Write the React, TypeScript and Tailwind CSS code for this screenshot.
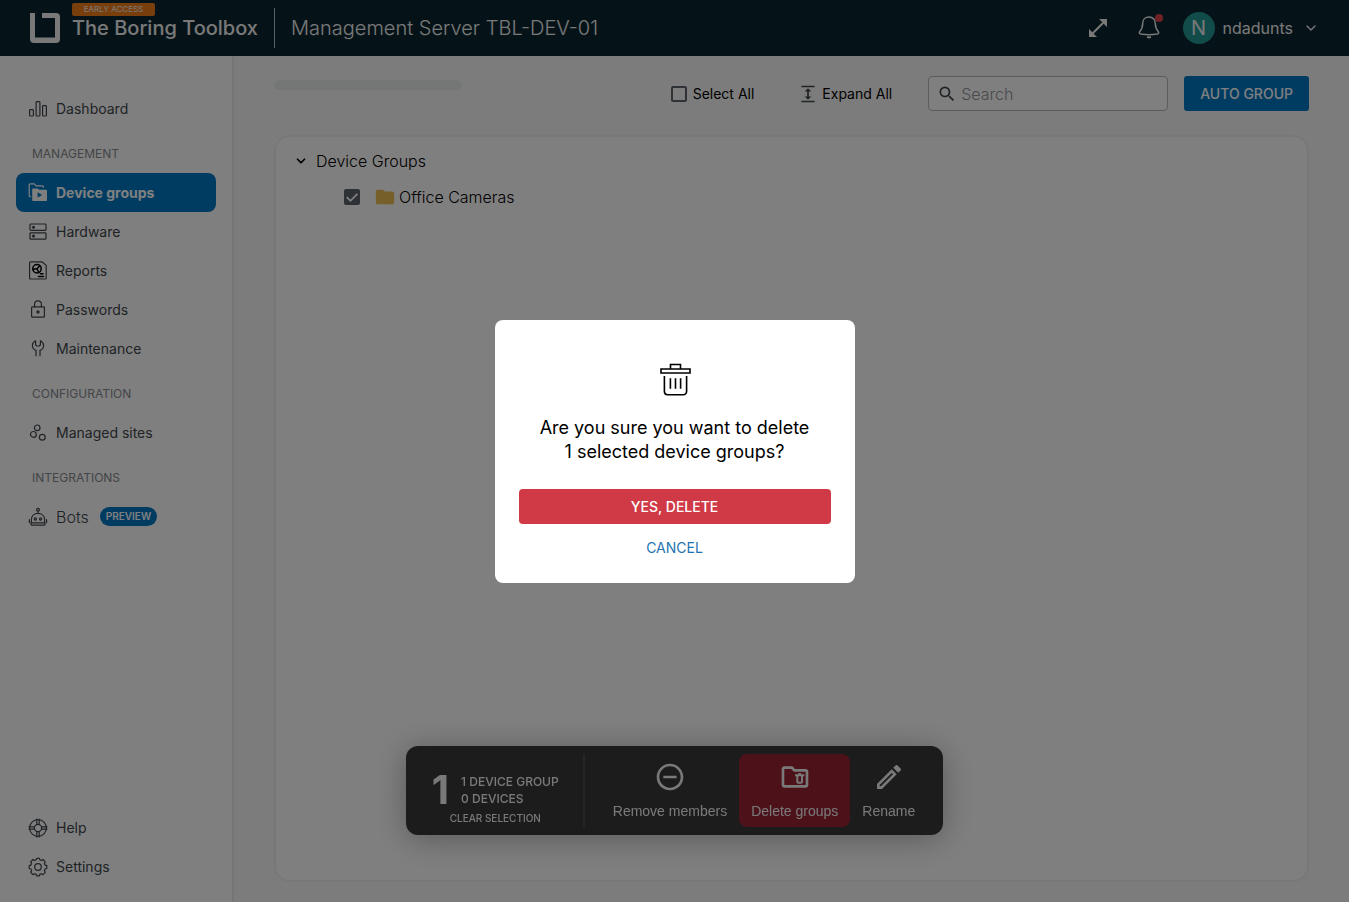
import { useState } from 'react';
import type { ReactNode } from 'react';
import {
  MdOpenInFull,
  MdSearch,
  MdExpand,
  MdFolder,
  MdRemoveCircleOutline,
  MdOutlineFolderDelete,
  MdOutlineEdit,
} from 'react-icons/md';
import { ChevronDown } from 'lucide-react';

/* ================= ICONS ================= */

function LineIcon({ children }: { children: ReactNode }) {
  return (
    <svg
      viewBox="0 0 20 20"
      className="w-5 h-5 shrink-0"
      fill="none"
      stroke="currentColor"
      strokeWidth="1.2"
      strokeLinecap="round"
      strokeLinejoin="round"
      aria-hidden="true"
    >
      {children}
    </svg>
  );
}

const icons = {
  dashboard: (
    <LineIcon>
      <rect x="1.6" y="10.6" width="3.8" height="6.4" rx="0.8" />
      <rect x="8.1" y="2.6" width="3.8" height="14.4" rx="0.8" />
      <rect x="14.6" y="6.6" width="3.8" height="10.4" rx="0.8" />
    </LineIcon>
  ),
  groups: (
    <LineIcon>
      <path d="M2.6 13.6h-.4a1 1 0 0 1-1-1V1.800a1 1 0 0 1 1-1h4.200l1.800 2h6.200a1 1 0 0 1 1 1v.4" />
      <path
        fillRule="evenodd"
        fill="currentColor"
        stroke="none"
        d="M5 5.400h4.600L11 6.800h7.200a.8.8 0 0 1 .8.8v9.600a.8.8 0 0 1-.8.8H5a.8.8 0 0 1-.8-.8v-11A.8.8 0 0 1 5 5.400zM9.600 9.200v5.400l4.600-2.700z"
      />
    </LineIcon>
  ),
  hardware: (
    <LineIcon>
      <rect x="2" y="2" width="16" height="6.400" rx="0.800" />
      <rect x="2" y="10.800" width="16" height="6.400" rx="0.800" />
      <circle cx="5.500" cy="5.200" r="0.900" fill="currentColor" />
      <circle cx="5.500" cy="14" r="0.900" fill="currentColor" />
    </LineIcon>
  ),
  reports: (
    <LineIcon>
      <path d="M2.600.800H14l4.200 3.600V17a1 1 0 0 1-1 1H2.600a1 1 0 0 1-1-1V1.800a1 1 0 0 1 1-1z" />
      <g stroke="#000" strokeWidth="1.500">
        <circle cx="9" cy="7.700" r="4.200" />
        <path d="M5 8.200l4-.5 2.800-3M9 7.700l1.800 3.800M12.500 12.800h2.500M10.500 15.400h5" />
      </g>
    </LineIcon>
  ),
  passwords: (
    <LineIcon>
      <rect x="3.600" y="6.800" width="12.800" height="10.400" rx="0.800" />
      <path d="M6.600 6.800V4.200a3.400 3.400 0 0 1 6.800 0v2.600" />
      <circle cx="10" cy="12" r="1.100" fill="currentColor" />
    </LineIcon>
  ),
  maintenance: (
    <LineIcon>
      <path d="M8 16.800v-5.400C5.800 10.500 4.400 8.700 4.400 6.400c0-2 1.200-3.700 3.200-4.700V6L9 7h2l1.400-1V1.700c2 1 3.200 2.700 3.200 4.700 0 2.300-1.400 4.100-3.600 5v5.400" />
    </LineIcon>
  ),
  sites: (
    <LineIcon>
      <circle cx="9.200" cy="4.800" r="2.800" />
      <circle cx="5.400" cy="11.400" r="2.900" />
      <circle cx="14.300" cy="14.300" r="2.900" />
    </LineIcon>
  ),
  bots: (
    <LineIcon>
      <circle cx="10" cy="2.800" r="1.400" />
      <path d="M10 4.200v2M3.400 15.800v-3.200C3.400 8.800 6.200 6.400 10 6.400s6.600 2.400 6.600 6.200v3.200M3.400 15.800h13.200M4 18.200h12a1 1 0 0 0 1-1v-1.400H3v1.400a1 1 0 0 0 1 1zM1.400 12.600v3M18.600 12.600v3" />
      <circle cx="7.400" cy="12" r="1.100" />
      <circle cx="12.600" cy="12" r="1.100" />
    </LineIcon>
  ),
  help: (
    <LineIcon>
      <circle cx="10" cy="10" r="8.400" />
      <circle cx="10" cy="10" r="3.700" />
      <path d="M8.800 1v5.600M11.200 1v5.600M8.800 13.400V19M11.200 13.400V19M1 8.800h5.600M1 11.200h5.600M13.400 8.800H19M13.400 11.200H19" />
    </LineIcon>
  ),
  settings: (
    <LineIcon>
      <circle cx="10" cy="10" r="3.300" />
      <path d="M8.200 2.700 8.600 1.300h2.800l.4 1.400 1.500.7 1.700-.9 2.300 2.300-.9 1.700.7 1.600 1.700.500v2.900l-1.700.500-.7 1.600.9 1.700-2.300 2.300-1.700-.9-1.500.7-.4 1.400H8.600l-.4-1.400-1.600-.7-1.700.9-2.200-2.300.9-1.700-.7-1.600-1.700-.500V8.600l1.700-.500.7-1.600-.9-1.700 2.200-2.300 1.700.9z" />
    </LineIcon>
  ),
};

function Logo() {
  return (
    <svg viewBox="0 0 30 30" className="w-[30px] h-[30px]" fill="currentColor" aria-hidden="true">
      <path d="M0 0h5v24.500h20V5H12V0h14a4 4 0 0 1 4 4v22a4 4 0 0 1-4 4H4a4 4 0 0 1-4-4z" />
    </svg>
  );
}

function BellIcon() {
  return (
    <svg
      viewBox="0 0 24 24"
      className="w-6 h-6"
      fill="none"
      stroke="currentColor"
      strokeWidth="1.500"
      strokeLinecap="round"
      strokeLinejoin="round"
      aria-hidden="true"
    >
      <path d="M12 1c-3.800 0-6.300 2.700-6.300 6.200 0 4.600-1 6.200-2.900 8.300-.9 1-.5 2.300 1 2.600 5.400.9 11 .9 16.400 0 1.500-.3 1.900-1.600 1-2.600-1.900-2.100-2.900-3.700-2.900-8.300C18.300 3.700 15.800 1 12 1z" />
      <path d="M10.800 21.200c.8.4 1.600.4 2.400 0" strokeWidth="2" />
    </svg>
  );
}

function TrashIcon() {
  return (
    <svg viewBox="0 0 32 34" className="w-8 h-[34px]" fill="none" stroke="#000" strokeWidth="1.600" aria-hidden="true">
      <path d="M2 6h29v4H2zM11.500 6V1.500h10V6" />
      <path d="M5.400 13V28.500a3.200 3.200 0 0 0 3.200 3.200h15.800a3.200 3.200 0 0 0 3.200-3.200V13M11.400 15.200v10.600M16.500 15.200v10.600M21.600 15.200v10.600" />
    </svg>
  );
}

/* ================= SIDEBAR ================= */

type NavItem = { label: string; icon: ReactNode; active?: boolean; badge?: string };

const sections: { title?: string; items: NavItem[] }[] = [
  { items: [{ label: 'Dashboard', icon: icons.dashboard }] },
  {
    title: 'MANAGEMENT',
    items: [
      { label: 'Device groups', icon: icons.groups, active: true },
      { label: 'Hardware', icon: icons.hardware },
      { label: 'Reports', icon: icons.reports },
      { label: 'Passwords', icon: icons.passwords },
      { label: 'Maintenance', icon: icons.maintenance },
    ],
  },
  { title: 'CONFIGURATION', items: [{ label: 'Managed sites', icon: icons.sites }] },
  { title: 'INTEGRATIONS', items: [{ label: 'Bots', icon: icons.bots, badge: 'PREVIEW' }] },
];

const footerItems: NavItem[] = [
  { label: 'Help', icon: icons.help },
  { label: 'Settings', icon: icons.settings },
];

function NavLink({ item }: { item: NavItem }) {
  return (
    <a
      href="#"
      className={
        item.active
          ? 'flex items-center gap-2 h-[39px] px-3 rounded-lg bg-[#0078c4] text-white text-sm font-bold'
          : 'flex items-center gap-2 h-[39px] px-3 rounded-lg text-[#41474d] text-sm'
      }
    >
      {item.icon}
      <span className={item.badge ? 'text-base font-light' : ''}>{item.label}</span>
      {item.badge && (
        <span className="ml-[3px] px-1.5 rounded-full bg-[#0078c4] text-white text-[10px] leading-[19px] font-semibold">
          {item.badge}
        </span>
      )}
    </a>
  );
}

function Sidebar() {
  return (
    <aside className="flex flex-col justify-between w-[234px] shrink-0 px-4 pt-[33px] pb-4 bg-white border-r-2 border-[#ececec]">
      <nav>
        {sections.map((section) => (
          <div key={section.items[0].label}>
            {section.title && (
              <h2 className="px-4 pt-[18px] pb-[11px] text-xs leading-4 text-[#868b90]">{section.title}</h2>
            )}
            {section.items.map((item) => (
              <NavLink key={item.label} item={item} />
            ))}
          </div>
        ))}
      </nav>
      <nav>
        {footerItems.map((item) => (
          <NavLink key={item.label} item={item} />
        ))}
      </nav>
    </aside>
  );
}

/* ================= HEADER ================= */

function Header() {
  return (
    <header className="flex items-center justify-between h-14 pl-[30px] pr-[30px] bg-[#0a2631] text-[#f2f2f2]">
      <div className="flex items-center">
        <Logo />
        <div className="relative ml-3">
          <span className="absolute -top-[11px] left-0 w-[83px] h-[13px] rounded-xs bg-[#f07d18] text-center text-[8px] leading-[13px]">
            EARLY ACCESS
          </span>
          <h1 className="text-xl font-medium">The Boring Toolbox</h1>
        </div>
        <div className="ml-4 w-px h-10 bg-[#b8bfc2]" />
        <p className="ml-4 text-xl font-light">Management Server TBL-DEV-01</p>
      </div>
      <div className="flex items-center">
        <button aria-label="Full screen">
          <MdOpenInFull className="w-6 h-6" />
        </button>
        <button aria-label="Notifications" className="relative ml-[27px]">
          <BellIcon />
          <span className="absolute -top-0.5 -right-0.5 w-2 h-2 rounded-full bg-[#e0434c]" />
        </button>
        <button className="flex items-center ml-[22px]">
          <span className="flex items-center justify-center w-8 h-8 rounded-full bg-[#239896] text-xl">N</span>
          <span className="ml-2 text-base">ndadunts</span>
          <ChevronDown className="ml-2.5 w-4 h-4" />
        </button>
      </div>
    </header>
  );
}

/* ================= PAGE CONTENT ================= */

function Checkbox({ id, checked, onChange }: { id: string; checked: boolean; onChange: () => void }) {
  return (
    <span className="relative flex w-4 h-4">
      <input
        id={id}
        type="checkbox"
        checked={checked}
        onChange={onChange}
        className="peer appearance-none w-4 h-4 rounded-xs border-2 border-[#5c636b] checked:bg-[#5c636b]"
      />
      <svg
        viewBox="0 0 16 16"
        className="hidden peer-checked:block absolute inset-0 pointer-events-none"
        fill="none"
        stroke="#fff"
        strokeWidth="1.800"
        aria-hidden="true"
      >
        <path d="M2.800 8.200l3.600 3.600 7-7" />
      </svg>
    </span>
  );
}

function Toolbar() {
  const [all, setAll] = useState(false);

  return (
    <div className="flex items-start justify-between">
      <div className="mt-1 w-[188px] h-2.5 rounded-md bg-[#ebefef]" />
      <div className="flex items-center text-sm">
        <div className="flex items-center gap-1.5">
          <Checkbox id="select-all" checked={all} onChange={() => setAll(!all)} />
          <label htmlFor="select-all">Select All</label>
        </div>
        <button className="flex items-center gap-1 ml-11">
          <MdExpand className="w-5 h-5 text-[#41474d]" />
          Expand All
        </button>
        <div className="flex items-center gap-1 ml-9 w-60 h-[35px] px-2 rounded-sm border border-[#b4b8bc] bg-white">
          <MdSearch className="w-5 h-5 shrink-0 text-[#41474d]" />
          <input
            type="search"
            aria-label="Search"
            placeholder="Search"
            className="w-full min-w-0 text-base font-light outline-none placeholder:text-[#8f9499]"
          />
        </div>
        <button className="ml-4 px-4 h-[35px] rounded-[3px] bg-[#0078c4] text-white font-medium">AUTO GROUP</button>
      </div>
    </div>
  );
}

function GroupTree() {
  const [checked, setChecked] = useState(true);

  return (
    <section className="flex-1 mt-6 px-[18px] py-1.5 rounded-2xl border-2 border-[#f0f0f0] bg-white font-light">
      <div className="flex items-center gap-2 h-9">
        <ChevronDown className="w-[14px] h-[14px]" strokeWidth={3} />
        Device Groups
      </div>
      <div className="flex items-center h-9 pl-[50px]">
        <Checkbox id="office-cameras" checked={checked} onChange={() => setChecked(!checked)} />
        <label htmlFor="office-cameras" className="flex items-center gap-[3px] ml-3.5">
          <MdFolder className="w-[22px] h-[22px] text-[#efbe55]" />
          Office Cameras
        </label>
      </div>
    </section>
  );
}

/* ================= SELECTION BAR ================= */

const actions = [
  { label: 'Remove members', icon: <MdRemoveCircleOutline className="w-8 h-8" /> },
  { label: 'Delete groups', icon: <MdOutlineFolderDelete className="w-8 h-8" />, danger: true },
  { label: 'Rename', icon: <MdOutlineEdit className="w-8 h-8" /> },
];

function SelectionBar() {
  return (
    <div className="fixed inset-x-0 bottom-[67px] flex justify-center">
      <div className="flex p-2 pr-4 rounded-xl bg-[#383838] text-[#f2f2f2] shadow-[0_4px_32px_rgba(0,0,0,0.3)]">
        <div className="flex flex-col items-center w-[171px] pr-1.5 pt-4 border-r-2 border-[#4d4d4d]">
          <div className="flex items-center gap-3">
            <span className="text-[40px] leading-10 font-bold">1</span>
            <p className="text-xs leading-[17px] font-medium">
              1 DEVICE GROUP
              <br />0 DEVICES
            </p>
          </div>
          <button className="text-[10px] leading-4 font-medium">CLEAR SELECTION</button>
        </div>
        <div className="flex ml-4 font-['Liberation_Sans',sans-serif]">
          {actions.map((action) => (
            <button
              key={action.label}
              className={
                action.danger
                  ? 'flex flex-col items-center gap-2 h-[73px] px-3 pt-[7px] rounded-lg bg-[#9a2335] text-sm'
                  : 'flex flex-col items-center gap-2 h-[73px] px-3 pt-[7px] rounded-lg text-sm'
              }
            >
              {action.icon}
              {action.label}
            </button>
          ))}
        </div>
      </div>
    </div>
  );
}

/* ================= CONFIRM DIALOG ================= */

function DeleteDialog({ onClose }: { onClose: () => void }) {
  return (
    <div className="fixed inset-0 z-50 flex items-center justify-center bg-black/50">
      <div
        role="dialog"
        aria-modal="true"
        aria-labelledby="delete-title"
        className="flex flex-col items-center w-[360px] px-6 pt-[43px] pb-[23px] rounded-lg bg-white"
      >
        <TrashIcon />
        <h2 id="delete-title" className="mt-[19px] text-center text-lg leading-6">
          Are you sure you want to delete
          <br />1 selected device groups?
        </h2>
        <button
          onClick={onClose}
          className="mt-[25px] w-full h-[35px] pt-px rounded-sm bg-[#cf3a46] text-white text-sm font-medium"
        >
          YES, DELETE
        </button>
        <button onClick={onClose} className="mt-3 text-sm leading-6 text-[#1f74b0]">
          CANCEL
        </button>
      </div>
    </div>
  );
}

export default function App() {
  const [open, setOpen] = useState(true);

  return (
    <div className="flex flex-col min-h-screen bg-[#f9f9f9] text-black font-['Inter',sans-serif]">
      <Header />
      <div className="flex flex-1">
        <Sidebar />
        <main className="flex flex-col flex-1 min-w-0 px-10 pt-5 pb-5">
          <Toolbar />
          <GroupTree />
        </main>
      </div>
      <SelectionBar />
      {open && <DeleteDialog onClose={() => setOpen(false)} />}
    </div>
  );
}
